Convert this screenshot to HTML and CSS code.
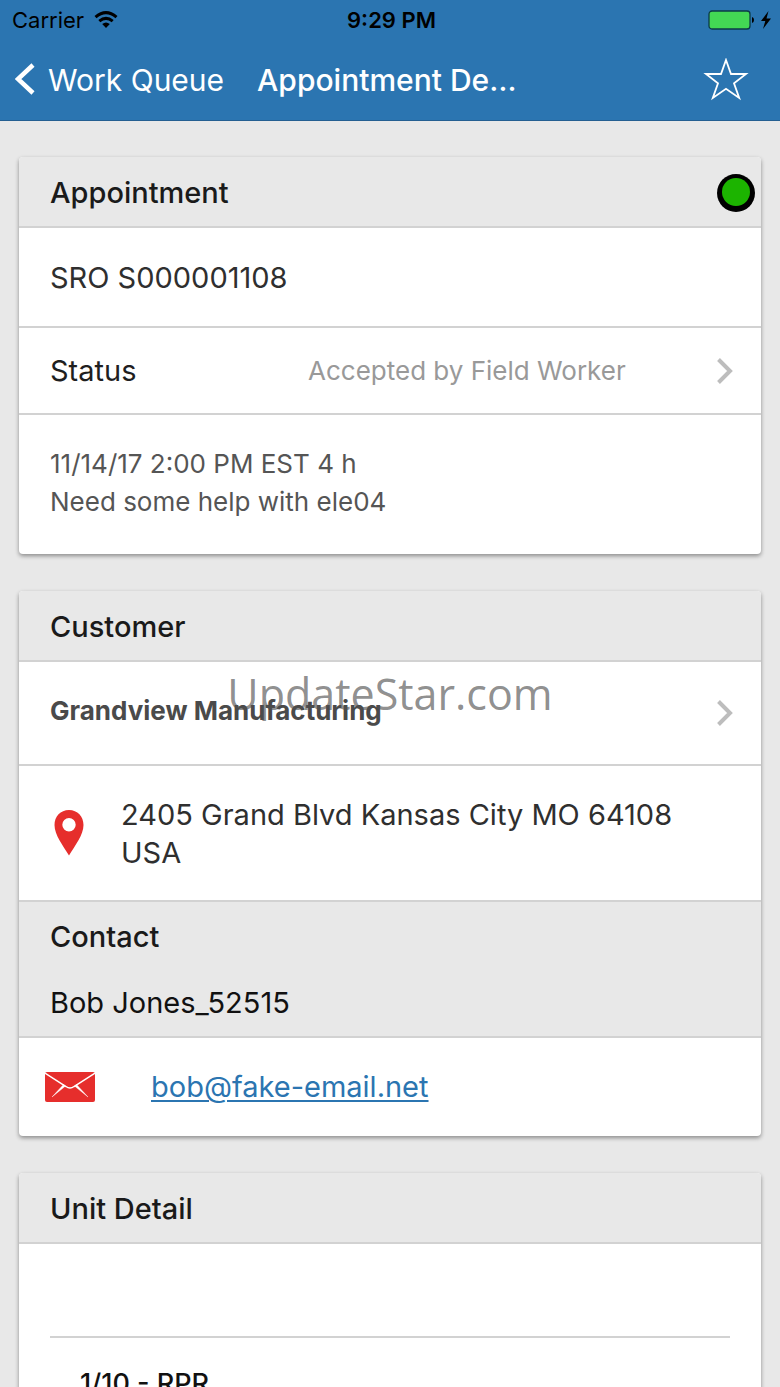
FILE: index.html
```html
<!DOCTYPE html>
<html lang="en">
<head>
<meta charset="utf-8">
<meta name="viewport" content="width=device-width, initial-scale=1">
<title>Appointment Details</title>
<link rel="stylesheet" href="styles.css">
</head>
<body>
<div class="app">
  <header class="top">
    <div class="status-bar">
      <div class="carrier">
        <span>Carrier</span>
        <svg width="24" height="18" viewBox="0 0 24 18" aria-hidden="true">
          <path d="M1.500 6.200Q12 -3 22.500 6.200" fill="none" stroke="#000" stroke-width="3"/>
          <path d="M5.300 10.200Q12 4.600 18.700 10.200" fill="none" stroke="#000" stroke-width="3"/>
          <path d="M8.200 13Q12 10 15.800 13L12 17Z"/>
        </svg>
      </div>
      <span class="clock">9:29 PM</span>
      <div class="power">
        <svg width="47" height="20" viewBox="0 0 47 20" aria-hidden="true">
          <rect x="1" y="1" width="41" height="18" rx="3" fill="#43d854" stroke="#0c3b45" stroke-width="1.300"/>
          <path d="M44 7q2 .5 2 3t-2 3z"/>
        </svg>
        <svg width="10" height="18" viewBox="0 0 10 18" aria-hidden="true">
          <path d="M7.500 0L0 10h4.300L2 18L10 7.500H5.500Z"/>
        </svg>
      </div>
    </div>
    <nav class="nav-bar">
      <button class="back" type="button">
        <svg width="20" height="34" viewBox="0 0 20 34" aria-hidden="true">
          <path d="M18 2L3 16L18 30" fill="none" stroke="#fff" stroke-width="4.500"/>
        </svg>
        <span>Work Queue</span>
      </button>
      <h1 class="title">Appointment Details</h1>
      <button class="favorite" type="button" aria-label="Favorite">
        <svg width="46" height="44" viewBox="0 0 46 44" aria-hidden="true">
          <path d="M23 2L28 16H43L31 25.200L36.200 40L23 30.800L9.800 40L15 25.200L3 16H18Z" fill="none" stroke="#fff" stroke-width="1.800"/>
        </svg>
      </button>
    </nav>
  </header>

  <main class="content">
    <section class="card">
      <div class="card-head">
        <h2>Appointment</h2>
        <svg width="38" height="38" viewBox="0 0 38 38" role="img" aria-label="Active">
          <circle cx="19" cy="19" r="19"/>
          <circle cx="19" cy="18" r="14" fill="#1cb400"/>
        </svg>
      </div>
      <div class="row row-sro">SRO S000001108</div>
      <button class="row row-status" type="button">
        <span class="label">Status</span>
        <span class="value">Accepted by Field Worker</span>
        <svg class="chevron" width="18" height="28" viewBox="0 0 18 28" aria-hidden="true">
          <path d="M2.500 2.500L14 14L2.500 25.500" fill="none" stroke="#bdbdbd" stroke-width="4"/>
        </svg>
      </button>
      <div class="row row-notes">
        <p>11/14/17 2:00 PM EST 4 h</p>
        <p>Need some help with ele04</p>
      </div>
    </section>

    <section class="card">
      <div class="card-head"><h2>Customer</h2></div>
      <button class="row row-company" type="button">
        <span class="company">Grandview Manufacturing</span>
        <svg class="chevron" width="18" height="28" viewBox="0 0 18 28" aria-hidden="true">
          <path d="M2.500 2.500L14 14L2.500 25.500" fill="none" stroke="#bdbdbd" stroke-width="4"/>
        </svg>
      </button>
      <div class="row row-address">
        <svg width="30" height="46" viewBox="0 0 30 46" aria-hidden="true">
          <path fill-rule="evenodd" fill="#e62e2c" d="M15 0C6.500 0 .5 6.500 .5 15C.5 25 9 35.500 15 45.500C21 35.500 29.500 25 29.500 15C29.500 6.500 23.500 0 15 0ZM15 8a6.700 6.700 0 1 0 0 13.400a6.700 6.700 0 1 0 0-13.400Z"/>
        </svg>
        <address>2405 Grand Blvd Kansas City MO 64108 USA</address>
      </div>
      <div class="contact">
        <h2>Contact</h2>
        <p>Bob Jones_52515</p>
      </div>
      <div class="row row-email">
        <svg width="50" height="30" viewBox="0 0 50 30" aria-hidden="true">
          <rect width="50" height="30" rx="2" fill="#e62e2c"/>
          <path d="M0 1.200L21 14.500Q25 17.500 29 14.500L50 1.200" fill="none" stroke="#fff" stroke-width="1.500"/>
          <path d="M7 25L18.500 12.500L20.500 14ZM43 25L31.500 12.500L29.500 14Z" fill="#fff" stroke="#fff" stroke-width=".4"/>
        </svg>
        <a href="mailto:bob@fake-email.net">bob@fake-email.net</a>
      </div>
    </section>

    <section class="card">
      <div class="card-head"><h2>Unit Detail</h2></div>
      <div class="unit">
        <div class="unit-blank"></div>
        <p class="unit-line">1/10 - RPR</p>
      </div>
    </section>
  </main>
  <div class="watermark">UpdateStar.com</div>
</div>
</body>
</html>
```
FILE: styles.css
```css
* { box-sizing: border-box; }

body {
  margin: 0;
  background: #e8e8e8;
  color: #2f2f2f;
  font-family: Inter, Roboto, sans-serif;
  font-size: 29px;
  line-height: 38px;
}

h1, h2, p { margin: 0; font-weight: 500; font-size: inherit; }
p { font-weight: 400; }
svg { display: block; flex: none; }

button {
  border: 0;
  padding: 0;
  background: none;
  color: inherit;
  font: inherit;
  text-align: left;
}

.app {
  position: relative;
  display: flex;
  flex-direction: column;
  height: 100vh;
  overflow: hidden;
}

.top {
  flex: none;
  background: #2b75b1;
  border-bottom: 1px solid #245f91;
}

.status-bar {
  display: grid;
  grid-template-columns: 1fr auto 1fr;
  align-items: center;
  height: 40px;
  padding: 0 9px 0 12px;
  color: #000;
  font-size: 22px;
}
.carrier { display: flex; align-items: center; gap: 10px; }
.clock { font-weight: 600; }
.power { display: flex; align-items: center; justify-content: flex-end; gap: 6px; }

.nav-bar {
  display: flex;
  align-items: center;
  height: 80px;
  padding: 0 31px 0 15px;
  color: #fff;
  font-size: 30px;
}
.back { display: flex; align-items: center; gap: 13px; color: #fff; }
.title {
  width: 268px;
  margin-left: 33px;
  overflow: hidden;
  text-overflow: ellipsis;
  white-space: nowrap;
}
.favorite { margin-left: auto; }

.content {
  flex: 1;
  display: flex;
  flex-direction: column;
  gap: 37px;
  min-height: 0;
  padding: 36px 19px;
}

.card {
  flex: none;
  overflow: hidden;
  border-radius: 4px;
  background: #fff;
  box-shadow: 0 2px 4px rgba(0, 0, 0, 0.4);
}

.card-head {
  display: flex;
  align-items: center;
  justify-content: space-between;
  height: 71px;
  padding: 2px 6px 0 31px;
  border-bottom: 2px solid #d2d2d2;
  background: #e8e8e8;
}
h2 { color: #1a1a1a; }

.row {
  display: flex;
  align-items: center;
  width: 100%;
  padding: 0 27px 0 31px;
  border-bottom: 2px solid #d2d2d2;
}
.row:last-child { border-bottom: 0; }

.row-sro { height: 100px; padding-top: 2px; }
.row-status { height: 87px; }
.label { width: 258px; color: #1f1f1f; }
.value { color: #999; font-size: 26px; }
.chevron { margin-left: auto; }

.row-notes {
  flex-direction: column;
  align-items: flex-start;
  justify-content: center;
  height: 139px;
  padding-bottom: 4px;
  color: #555;
  font-size: 26px;
}

.row-company { height: 104px; }
.company { padding-bottom: 4px; color: #4a4a4a; font-size: 26px; font-weight: 700; }

.row-address { gap: 37px; height: 136px; padding-left: 35px; }
address { padding-top: 2px; font-style: normal; }

.contact {
  display: flex;
  flex-direction: column;
  gap: 28px;
  padding: 16px 31px 14px;
  border-bottom: 2px solid #d2d2d2;
  background: #e8e8e8;
  color: #111;
}

.row-email { gap: 56px; height: 98px; padding-left: 26px; }
.row-email a {
  color: #2b75b1;
  text-decoration-thickness: 2px;
  text-underline-offset: 3px;
}

.unit { padding: 0 31px; }
.unit-blank { height: 94px; border-bottom: 2px solid #d2d2d2; }
.unit-line { padding: 27px 30px; color: #111; font-size: 27px; font-weight: 500; }

.watermark {
  position: absolute;
  top: 50%;
  left: 0;
  right: 0;
  transform: translateY(-50%);
  color: rgba(80, 80, 80, 0.65);
  font-family: "Open Sans", "Noto Sans", sans-serif;
  font-size: 43px;
  line-height: 60px;
  text-align: center;
  pointer-events: none;
}
```
